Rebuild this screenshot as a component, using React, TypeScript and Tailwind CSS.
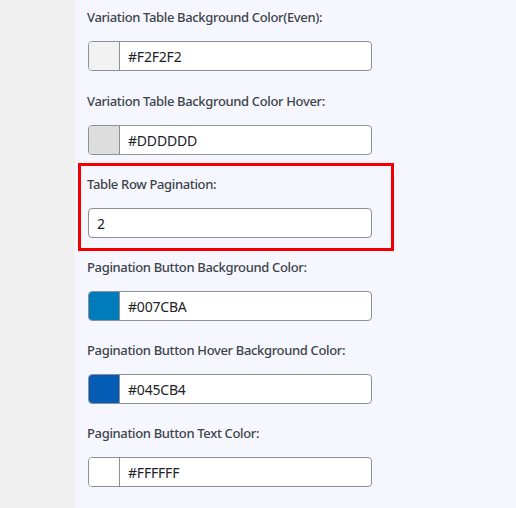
import React from "react";

type Field = { label: string; value: string; swatch?: string; highlight?: boolean };

const fields: Field[] = [
  { label: "Variation Table Background Color(Even):", value: "#F2F2F2", swatch: "#F2F2F2" },
  { label: "Variation Table Background Color Hover:", value: "#DDDDDD", swatch: "#DDDDDD" },
  { label: "Table Row Pagination:", value: "2", highlight: true },
  { label: "Pagination Button Background Color:", value: "#007CBA", swatch: "#007CBA" },
  { label: "Pagination Button Hover Background Color:", value: "#045CB4", swatch: "#045CB4" },
  { label: "Pagination Button Text Color:", value: "#FFFFFF", swatch: "#FFFFFF" },
];

export default function App() {
  return (
    <div
      className="flex w-[516px] h-[508px] overflow-hidden"
      style={{ fontFamily: '"Noto Sans", "Open Sans", sans-serif' }}
    >
      <div className="w-[75px] shrink-0 bg-[#f0f0f1]" />
      <div className="flex-1 bg-[#f6f7fe] pl-[13px] pt-[7px]">
        {fields.map((f, i) => (
          <div key={i} className={`relative w-[284px] ${i === 0 ? "mb-[20px]" : "mb-[19px]"}`}>
            {f.highlight && (
              <span className="absolute -top-[11px] -bottom-[13px] -left-[10px] -right-[22px] border-[3px] border-[#f00000] pointer-events-none" />
            )}
            <div className="h-[20px] leading-[20px] text-[13px] tracking-[-0.35px] font-medium text-[#3c434a] mb-[14px] -ml-[1px] whitespace-nowrap">
              {f.label}
            </div>
            <div className="flex h-[30px] rounded-[4px] border border-[#8c8f94] bg-white overflow-hidden">
              {f.swatch && (
                <div
                  className="w-[31px] shrink-0 border-r border-[#8c8f94]"
                  style={{ backgroundColor: f.swatch }}
                />
              )}
              <div className="flex items-center pl-[8px] text-[14px] tracking-[-0.2px] text-[#1d2327]">
                {f.value}
              </div>
            </div>
          </div>
        ))}
      </div>
    </div>
  );
}
